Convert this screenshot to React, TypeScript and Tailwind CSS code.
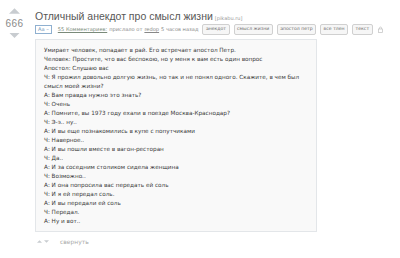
import React from 'react';

const lines = [
  'Умирает человек, попадает в рай. Его встречает апостол Петр.',
  'Человек: Простите, что вас беспокою, но у меня к вам есть один вопрос',
  'Апостол: Слушаю вас',
  'Ч: Я прожил довольно долгую жизнь, но так и не понял одного. Скажите, в чем был смысл моей жизни?',
  'А: Вам правда нужно это знать?',
  'Ч: Очень',
  'А: Помните, вы 1973 году ехали в поезде Москва-Краснодар?',
  'Ч: Э-э.. ну..',
  'А: И вы еще познакомились в купе с попутчиками',
  'Ч: Наверное..',
  'А: И вы пошли вместе в вагон-ресторан',
  'Ч: Да..',
  'А: И за соседним столиком сидела женщина',
  'Ч: Возможно..',
  'А: И она попросила вас передать ей соль',
  'Ч: И я ей передал соль.',
  'А: И вы передали ей соль',
  'Ч: Передал.',
  'А: Ну и вот..',
];

const tags = ['анекдот', 'смысл жизни', 'апостол петр', 'все тлен', 'текст'];

const Up = ({ className }: { className: string }) => (
  <svg className={className} viewBox="0 0 12 6" fill="currentColor">
    <path d="M0 6L6 0l6 6z" />
  </svg>
);

const Down = ({ className }: { className: string }) => (
  <svg className={className} viewBox="0 0 12 6" fill="currentColor">
    <path d="M0 0h12L6 6z" />
  </svg>
);

export default function App() {
  return (
    <div className="w-[400px] h-[258px] bg-white flex font-['DejaVu_Sans',sans-serif] text-[#333]">
      {/* rating */}
      <div className="w-[35px] shrink-0 flex flex-col items-center pt-[8px] pr-[6px]">
        <Up className="w-[11px] h-[6px] text-[#c8ccd0]" />
        <div className="text-[10px] leading-none text-[#8a8a8a] mt-[5px] font-['Liberation_Sans',sans-serif] tracking-[0.4px]">666</div>
        <Down className="w-[11px] h-[5px] text-[#c8ccd0] mt-[4px]" />
      </div>

      <div className="flex-1 pt-[9px]">
        <div className="flex items-baseline gap-[2px] whitespace-nowrap">
          <span className="text-[10.5px] leading-[14px] text-[#585858] font-['Liberation_Sans',sans-serif]">
            Отличный анекдот про смысл жизни
          </span>
          <span className="text-[5px] text-[#999]">[pikabu.ru]</span>
        </div>

        <div className="flex items-center mt-[1px] text-[5.1px] leading-none text-[#888] whitespace-nowrap">
          <span className="border border-[#8fb0d0] text-[#6a90b8] px-[2px] py-[1px] leading-none mr-[6px]">Aa –</span>
          <span className="underline text-[#7a8a7a] mr-[2px]">55 Комментариев:</span>
          <span>прислало от</span>
          <span className="underline mx-[2px]">redop</span>
          <span>5 часов назад</span>
          <div className="flex gap-[4px] ml-[4px] text-[4.6px]">
            {tags.map((t) => (
              <span
                key={t}
                className="border border-[#d0d0d0] bg-[#f6f6f6] rounded-[2px] px-[2.5px] py-[2px] text-[#666] leading-none"
              >
                {t}
              </span>
            ))}
          </div>
          <svg className="w-[5px] h-[7px] ml-[5px] text-[#c4c4c4]" viewBox="0 0 10 14" fill="none" stroke="currentColor" strokeWidth="1.5">
            <rect x="1" y="6" width="8" height="7" />
            <path d="M3 6V4a2 2 0 014 0v2" />
          </svg>
        </div>

        <div className="mt-[4px] w-[282px] border border-[#e3e6e9] bg-[#f9f9f9] pl-[8px] pr-[8px] pt-[6px] pb-[5px] text-[5.7px] leading-[9px] text-[#3a3a3a]">
          {lines.map((l, i) => (
            <div key={i}>{l}</div>
          ))}
        </div>

        <div className="flex items-center mt-[5px] text-[6px] text-[#aaa]">
          <Up className="w-[5px] h-[3px] text-[#c8ccd0] ml-[2px]" />
          <Down className="w-[5px] h-[3px] text-[#c8ccd0] ml-[2px]" />
          <span className="ml-[11px]">свернуть</span>
        </div>
      </div>
    </div>
  );
}
